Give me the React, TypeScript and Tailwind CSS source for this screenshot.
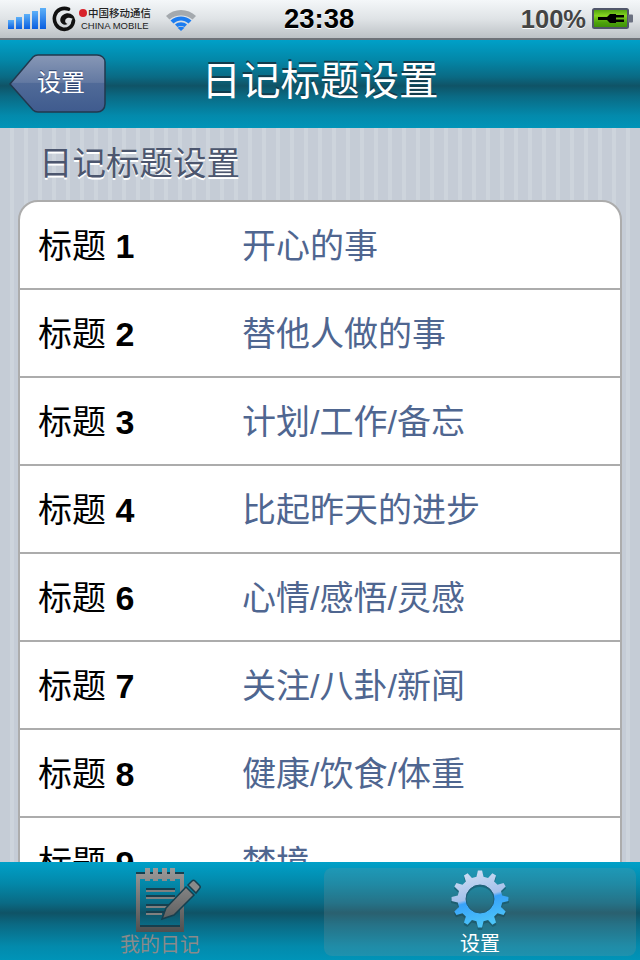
const cjk = "font-['Liberation_Sans','Noto_Sans_CJK_SC',sans-serif]";

const rows = [
  { label: "1", value: "开心的事" },
  { label: "2", value: "替他人做的事" },
  { label: "3", value: "计划/工作/备忘" },
  { label: "4", value: "比起昨天的进步" },
  { label: "6", value: "心情/感悟/灵感" },
  { label: "7", value: "关注/八卦/新闻" },
  { label: "8", value: "健康/饮食/体重" },
  { label: "9", value: "梦境" },
];

const barGradient =
  "bg-[linear-gradient(180deg,#00a0c8_0%,#0388a9_22%,#0a6a84_42%,#0f5366_52%,#0a6a84_64%,#038aac_86%,#0094b8_100%)]";

function Signal() {
  return (
    <svg width="40" height="24" viewBox="0 0 40 24">
      <defs>
        <linearGradient id="sig" x1="0" y1="0" x2="0" y2="1">
          <stop offset="0" stopColor="#5cb0f8" />
          <stop offset="1" stopColor="#0a5ee0" />
        </linearGradient>
      </defs>
      <rect x="0" y="13" width="6" height="9" fill="url(#sig)" />
      <rect x="8" y="10" width="6" height="12" fill="url(#sig)" />
      <rect x="16" y="7" width="6" height="15" fill="url(#sig)" />
      <rect x="24" y="4" width="6" height="18" fill="url(#sig)" />
      <rect x="32" y="1" width="6" height="21" fill="url(#sig)" />
    </svg>
  );
}

function MobileLogo() {
  return (
    <svg width="24" height="26" viewBox="0 0 24 26" fill="none">
      <path d="M16.500 3.200C11 1 4.500 3.500 2.800 9.500C1 16 5 22.500 11 23.300C16.500 24 21 20.500 21.500 14.500" stroke="#111" strokeWidth="3.600" strokeLinecap="round" />
      <path d="M23 14.500C23 9.500 18.500 6.500 14 7.500C10 8.500 7.500 12 8.500 15.500C9.500 18.500 13 19.500 15.500 18C13.500 17.500 12.500 15.500 13.500 13.500C15 11 19.500 11 23 14.500Z" fill="#111" />
    </svg>
  );
}

function Wifi() {
  return (
    <svg width="32" height="26" viewBox="0 0 32 26" fill="none">
      <path d="M1 10C9 2 23 2 31 10L27.500 13.500C21 8 11 8 4.500 13.500Z" fill="#a4a9ae" />
      <path d="M5.500 14.500C11.500 9 20.500 9 26.500 14.500L23.500 17.500C19 13.500 13 13.500 8.500 17.500Z" fill="#1c7cf0" />
      <path d="M10 18.500C13.500 15.500 18.500 15.500 22 18.500L19.500 21C17.500 19.500 14.500 19.500 12.500 21Z" fill="#1c7cf0" />
      <path d="M16 25L12.500 21.800C14.500 20.400 17.500 20.400 19.500 21.800Z" fill="#1c7cf0" />
    </svg>
  );
}

function Battery() {
  return (
    <svg width="42" height="22" viewBox="0 0 42 22">
      <defs>
        <linearGradient id="batt" x1="0" y1="0" x2="0" y2="1">
          <stop offset="0" stopColor="#4a9c10" />
          <stop offset="0.35" stopColor="#86d420" />
          <stop offset="0.7" stopColor="#4ea40c" />
          <stop offset="1" stopColor="#3c8c08" />
        </linearGradient>
      </defs>
      <rect x="1" y="1" width="35" height="19" rx="1.500" fill="url(#batt)" stroke="#50566a" strokeWidth="2" />
      <rect x="36" y="6.500" width="5" height="8" rx="1" fill="#6a7080" />
      {/* plug: cord, head, two prongs */}
      <path d="M6 9H15L18 6H24V15H18L15 12H6Z" fill="#000" />
      <rect x="24" y="7" width="8" height="2.500" fill="#000" />
      <rect x="24" y="11.500" width="8" height="2.500" fill="#000" />
    </svg>
  );
}

function BackShape() {
  return (
    <svg width="98" height="60" viewBox="0 0 98 60" className="absolute inset-0">
      <defs>
        <linearGradient id="back" x1="0" y1="0" x2="0" y2="1">
          <stop offset="0" stopColor="#8898b6" />
          <stop offset="0.48" stopColor="#6379a2" />
          <stop offset="0.5" stopColor="#506a98" />
          <stop offset="1" stopColor="#3f5b8e" />
        </linearGradient>
      </defs>
      <path d="M1 30L24 3C25.500 1.500 27 1 29 1H88C92.500 1 96 4 96 8V50C96 55 92.500 58 88 58H29C27 58 25.500 57.500 24 56Z" fill="url(#back)" stroke="#22384e" strokeWidth="1.500" />
    </svg>
  );
}

function Notebook() {
  return (
    <svg width="66" height="64" viewBox="0 0 66 64">
      <defs>
        <linearGradient id="note" gradientUnits="userSpaceOnUse" x1="0" y1="0" x2="0" y2="64">
          <stop offset="0" stopColor="#9a9a9a" />
          <stop offset="1" stopColor="#505050" />
        </linearGradient>
      </defs>
      {/* frame */}
      <path fillRule="evenodd" fill="url(#note)" d="M0 6H48V64H0ZM4 11V58H44V11Z" />
      <rect x="0" y="4" width="48" height="2" fill="#173f4e" />
      <rect x="4" y="57" width="40" height="2" fill="#173f4e" />
      {/* spiral */}
      <g fill="url(#note)">
        <rect x="9" y="0" width="5" height="13" />
        <rect x="17" y="0" width="5" height="13" />
        <rect x="26" y="0" width="5" height="13" />
        <rect x="34" y="0" width="5" height="13" />
      </g>
      <g fill="#173f4e">
        <rect x="10" y="20" width="29" height="2" />
        <rect x="10" y="27" width="29" height="2" />
        <rect x="10" y="36" width="26" height="2" />
        <rect x="10" y="43" width="18" height="2" />
      </g>
      <g fill="#808080">
        <rect x="10" y="22" width="29" height="2" />
        <rect x="10" y="29" width="29" height="2" />
        <rect x="10" y="38" width="24" height="2" />
        <rect x="10" y="45" width="16" height="2" />
      </g>
      {/* pencil */}
      <path d="M26 51L30 40L50 19L58 27L38 47Z" fill="url(#note)" stroke="#173f4e" strokeWidth="1.500" />
      <path d="M52 17L56 13C57 12 58 12 59 13L63.500 17.500C64.500 18.500 64.500 19.500 63.500 20.500L60 25Z" fill="#8a8a8a" stroke="#173f4e" strokeWidth="1.500" />
    </svg>
  );
}

// 12 tooth cog with a hole, outline worked out from the radii
function gearPath(cx: number, cy: number, teeth: number, outer: number, root: number, hole: number) {
  const pts: string[] = [];
  const step = (Math.PI * 2) / teeth;
  for (let i = 0; i < teeth; i++) {
    const a = i * step - Math.PI / 2;
    const spots: [number, number][] = [
      [root, a - step * 0.3],
      [outer, a - step * 0.14],
      [outer, a + step * 0.14],
      [root, a + step * 0.3],
    ];
    spots.forEach(([r, t]) => pts.push(`${(cx + r * Math.cos(t)).toFixed(2)},${(cy + r * Math.sin(t)).toFixed(2)}`));
  }
  const ring = `M${cx - hole},${cy}A${hole},${hole} 0 1 0 ${cx + hole},${cy}A${hole},${hole} 0 1 0 ${cx - hole},${cy}Z`;
  return `M${pts.join("L")}Z${ring}`;
}

function Gear() {
  return (
    <svg width="62" height="62" viewBox="0 0 62 62">
      <defs>
        <linearGradient id="gear" x1="0.1" y1="0" x2="0.35" y2="1">
          <stop offset="0" stopColor="#d5e2f5" />
          <stop offset="0.52" stopColor="#a4c0ea" />
          <stop offset="0.58" stopColor="#38a2fa" />
          <stop offset="1" stopColor="#4cc4f8" />
        </linearGradient>
      </defs>
      <path d={gearPath(31, 31, 12, 29, 23, 14)} fill="#12404f" opacity="0.4" fillRule="evenodd" />
      <path d={gearPath(31, 29, 12, 28.500, 22.500, 14)} fill="url(#gear)" fillRule="evenodd" />
      <circle cx="31" cy="29" r="14" fill="none" stroke="#1f5f78" strokeWidth="1" />
    </svg>
  );
}

export default function App() {
  return (
    <div className={`w-[640px] h-[960px] flex flex-col overflow-hidden ${cjk}`}>
      {/* status bar */}
      <div className="h-[40px] shrink-0 flex items-center pl-2 pr-[6px] border-b-2 border-[#6e7278] bg-[linear-gradient(180deg,#f4f7f9_0%,#dfe3e6_50%,#bcc1c5_100%)]">
        <Signal />
        <div className="ml-[4px]">
          <MobileLogo />
        </div>
        <div className="ml-[3px] w-[70px] flex flex-col leading-none text-[#222]">
          <div className="flex items-center gap-[1px]">
            <span className="w-[8px] h-[8px] rounded-full bg-[#d8222a] shrink-0" />
            <span className="text-[10.500px] font-medium whitespace-nowrap">中国移动通信</span>
          </div>
          <span className="text-[9.500px] mt-[2px] pl-[2px] whitespace-nowrap">CHINA MOBILE</span>
        </div>
        <div className="ml-[16px]">
          <Wifi />
        </div>
        <span className="ml-[87px] text-[27.500px] font-bold text-black [text-shadow:0_1px_0_#fff]">23:38</span>
        <span className="ml-auto text-[25.500px] font-bold text-[#444] [text-shadow:0_1px_0_#fff]">100%</span>
        <div className="ml-[6px]">
          <Battery />
        </div>
      </div>

      {/* nav bar */}
      <div className={`relative h-[88px] shrink-0 flex items-center justify-center pb-[4px] ${barGradient}`}>
        <span className="text-[39.500px] text-white [text-shadow:0_-2px_0_#123c4c]">日记标题设置</span>
        <button className="absolute left-[9px] top-[14px] w-[98px] h-[60px]">
          <BackShape />
          <span className="relative block pl-[6px] pb-[2px] text-[24px] text-white [text-shadow:0_-1px_0_#2e4470]">设置</span>
        </button>
      </div>

      {/* list */}
      <div className="flex-1 min-h-0 overflow-hidden bg-[repeating-linear-gradient(90deg,#c5ccd6_0px,#c5ccd6_10px,#cdd4dc_10px,#cdd4dc_14px)]">
        <div className="h-[72px] pl-[39px] pt-[14px] text-[33.500px] leading-[44px] text-[#4c566e] [text-shadow:0_2px_0_#fff]">
          日记标题设置
        </div>
        <div className="mx-[18px] bg-white border-2 border-[#acacac] rounded-[20px]">
          {rows.map((r) => (
            <div key={r.label} className="h-[88px] flex items-center pt-[3px] border-b-2 border-[#acacac] last:border-b-0">
              <span className="w-[222px] pl-[18px] text-[34px] text-black">
                标题 <span className="font-bold">{r.label}</span>
              </span>
              <span className="text-[34px] text-[#4f6690]">{r.value}</span>
            </div>
          ))}
        </div>
      </div>

      {/* tab bar */}
      <div className={`h-[98px] shrink-0 grid grid-cols-2 ${barGradient}`}>
        <div className="flex flex-col items-center pt-[6px]">
          <div className="ml-[17px]">
            <Notebook />
          </div>
          <span className="text-[20px] leading-[26px] text-[#8a8a8a]">我的日记</span>
        </div>
        <div className="flex flex-col items-center mx-[4px] mt-[6px] mb-[4px] pt-[2px] rounded-[8px] bg-[#969696]/20">
          <Gear />
          <span className="text-[20px] leading-[24px] text-white">设置</span>
        </div>
      </div>
    </div>
  );
}
